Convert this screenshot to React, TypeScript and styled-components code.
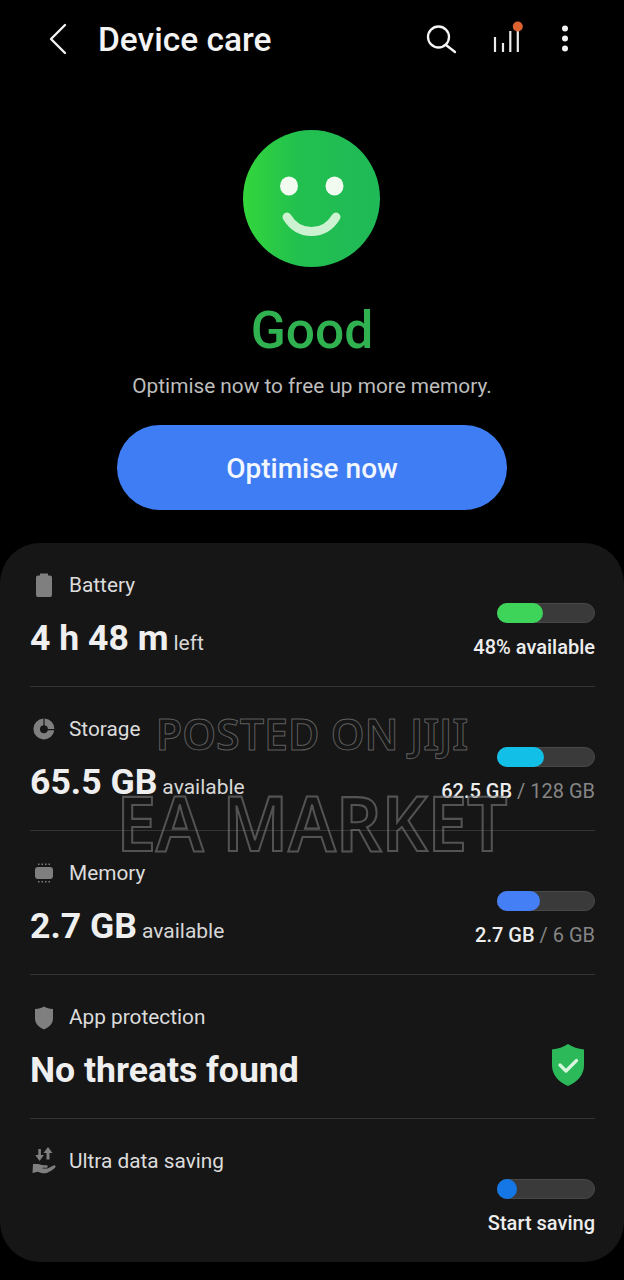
import React from "react";
import styled, { createGlobalStyle } from "styled-components";

const Global = createGlobalStyle`
  html, body { margin: 0; padding: 0; background: #000; }
  body { font-family: Roboto, "Liberation Sans", sans-serif; color: #f2f2f2; }
`;

const Page = styled.div`
  position: relative;
  width: 624px;
  height: 1280px;
  overflow: hidden;
  background: #000;
`;

const Header = styled.header`
  display: flex;
  align-items: center;
  height: 78px;
  padding-left: 48px;
`;

const BackIcon = styled.svg`
  width: 20px;
  height: 32px;
  margin-right: 30px;
`;

const Title = styled.h1`
  flex: 1;
  margin: 0;
  font-size: 33.500px;
  font-weight: 500;
  color: #f4f4f4;
`;

const Actions = styled.svg`
  width: 160px;
  height: 78px;
  margin-right: 40px;
  flex: none;
`;

const Hero = styled.section`
  display: flex;
  flex-direction: column;
  align-items: center;
  padding-top: 52px;
`;

const Face = styled.svg`
  width: 137px;
  height: 137px;
  display: block;
  margin-right: 2px;
`;

const Status = styled.div`
  margin-top: 35px;
  height: 58px;
  line-height: 58px;
  font-size: 51.500px;
  font-weight: 500;
  color: #2fb24f;
`;

const Hint = styled.p`
  margin: 12px 0 0;
  line-height: 28px;
  font-size: 20.800px;
  color: #bdbdbd;
`;

const CTA = styled.button`
  margin-top: 25px;
  width: 390px;
  height: 85px;
  padding: 2px 0 0;
  border: 0;
  border-radius: 43px;
  background: #3f7df4;
  color: #f2f6ff;
  font-family: inherit;
  font-size: 28px;
  font-weight: 500;
`;

const Card = styled.section`
  margin-top: 33px;
  height: 719px;
  padding: 0 29px 0 30px;
  box-sizing: border-box;
  border-radius: 40px;
  background: #161616;
`;

const Row = styled.article`
  display: flex;
  justify-content: space-between;
  height: 144px;
  box-sizing: border-box;
  border-bottom: 1px solid #343434;
  &:last-child { border-bottom: 0; height: 143px; }
`;

const Left = styled.div`
  display: flex;
  flex-direction: column;
  padding-top: 28px;
`;

const Label = styled.div`
  display: flex;
  align-items: center;
  height: 28px;
  font-size: 20.800px;
  color: #dcdcdc;
`;

const LabelIcon = styled.svg`
  width: 28px;
  height: 28px;
  margin-right: 11px;
  flex: none;
  fill: #7f7f7f;
`;

const Value = styled.div`
  margin-top: 17px;
  line-height: 44px;
  font-size: 35.600px;
  font-weight: 700;
  color: #efefef;
`;

const Unit = styled.span`
  margin-left: 5px;
  font-size: 21px;
  font-weight: 400;
  color: #d6d6d6;
`;

const Right = styled.div`
  display: flex;
  flex-direction: column;
  align-items: flex-end;
  padding-top: 60px;
`;

const Track = styled.div`
  width: 98px;
  height: 20px;
  box-sizing: border-box;
  border: 1px solid #484848;
  border-radius: 10px;
  background: #3a3a3a;
  position: relative;
`;

const Fill = styled.div<{ $color: string }>`
  position: absolute;
  left: -1px;
  top: -1px;
  height: 20px;
  border-radius: 10px;
  background: ${(p) => p.$color};
`;

const Reading = styled.div`
  margin-top: 11px;
  line-height: 26px;
  font-size: 20px;
  font-weight: 500;
  color: #ededed;
`;

const Total = styled.span`
  font-weight: 400;
  color: #858585;
`;

const Badge = styled.svg`
  width: 34px;
  height: 42px;
  margin: 69px 10px 0 0;
`;

/* Seller's outlined stamp laid over the card */
const Stamp = styled.div<{ $top: number; $size: number; $stroke: number; $ink: string; $tall: number }>`
  position: absolute;
  left: 0;
  right: 0;
  top: ${(p) => p.$top}px;
  text-align: center;
  font-family: "Noto Sans", "Open Sans", sans-serif;
  font-size: ${(p) => p.$size}px;
  font-weight: 600;
  line-height: 1;
  white-space: nowrap;
  color: transparent;
  -webkit-text-stroke: ${(p) => p.$stroke}px ${(p) => p.$ink};
  transform: scaleY(${(p) => p.$tall});
  transform-origin: 50% 0;
  pointer-events: none;
`;

const Bar = ({ pct, color }: { pct: number; color: string }) => (
  <Track>
    <Fill $color={color} style={{ width: `${pct}%` }} />
  </Track>
);

const BatteryGlyph = () => (
  <LabelIcon viewBox="0 0 28 28">
    <path d="M10 2.500h8v2h2a2 2 0 0 1 2 2v17.500a2 2 0 0 1-2 2h-12a2 2 0 0 1-2-2v-17.500a2 2 0 0 1 2-2h2z" />
  </LabelIcon>
);

const StorageGlyph = () => (
  <LabelIcon viewBox="0 0 28 28">
    <path d="M13.400 3.500a10.500 10.500 0 1 0 10.900 11.800h-6.500a4 4 0 1 1-4.400-5z" />
    <path d="M14.600 3.500a10.500 10.500 0 0 1 9.800 10.600h-6.500a4 4 0 0 0-3.300-3.800z" />
  </LabelIcon>
);

const MemoryGlyph = () => (
  <LabelIcon viewBox="0 0 28 28">
    <rect x="5" y="8" width="18" height="12" rx="3" />
    <path d="M8 4.500h1.500v1.500h-1.500zM11.500 4.500h1.500v1.500h-1.500zM15 4.500h1.500v1.500h-1.500zM18.500 4.500h1.500v1.500h-1.500zM8 22h1.500v1.500h-1.500zM11.500 22h1.500v1.500h-1.500zM15 22h1.500v1.500h-1.500zM18.500 22h1.500v1.500h-1.500z" />
  </LabelIcon>
);

const ShieldGlyph = () => (
  <LabelIcon viewBox="0 0 28 28">
    <path d="M14 3.500c2.500 1.400 5.500 2.200 9 2.500v9.500c0 5-3.600 8.800-9 11-5.400-2.200-9-6-9-11v-9.500c3.500-.3 6.500-1.100 9-2.500z" />
  </LabelIcon>
);

const DataGlyph = () => (
  <LabelIcon viewBox="0 0 28 28">
    <path d="M8.300 2h2.600v6h3l-4.300 6-4.300-6h3zM18 0l4.500 6h-3v6.500h-3V6h-3z" />
    <path d="M3 17h5c2 0 3.500 1.300 5.500 1.300h3c1.700 0 1.700 2.500 0 2.500h-4v.7h5l6-3c1.600-.6 2.800.8 1.700 2-3 2.800-6 4.500-8.500 5.500-2 .6-4 .4-6-.3l-3-1-5.200 1.300z" />
  </LabelIcon>
);

export default function App() {
  return (
    <Page>
      <Global />
      <Header>
        <BackIcon viewBox="0 0 20 32" fill="none" stroke="#f2f2f2" strokeWidth="2.400" strokeLinecap="round" strokeLinejoin="round">
          <path d="M17 2 3 16l14 14" />
        </BackIcon>
        <Title>Device care</Title>
        <Actions viewBox="424 0 160 78">
          <circle cx="438.500" cy="37" r="10.500" fill="none" stroke="#f5f5f5" strokeWidth="2.300" />
          <path d="m446 45 9 7" stroke="#f5f5f5" strokeWidth="2.300" strokeLinecap="round" />
          <g stroke="#ececec" strokeWidth="2.200">
            <path d="M495 37v15M503 43v9M510.300 31v21M517.800 27v25" />
          </g>
          <circle cx="517.800" cy="26.500" r="5" fill="#dc6230" />
          <g fill="#f2f2f2">
            <circle cx="565" cy="28.500" r="3" />
            <circle cx="565" cy="38.500" r="3" />
            <circle cx="565" cy="48.500" r="3" />
          </g>
        </Actions>
      </Header>

      <Hero>
        <Face viewBox="0 0 137 137">
          <defs>
            <linearGradient id="faceShade" x1="0" y1="0" x2="1" y2="0">
              <stop offset="0" stopColor="#33d63b" />
              <stop offset="0.4" stopColor="#22c04f" />
              <stop offset="1" stopColor="#1fb957" />
            </linearGradient>
          </defs>
          <circle cx="68.500" cy="68.500" r="68.500" fill="url(#faceShade)" />
          <ellipse cx="46" cy="56" rx="9" ry="9.500" fill="#f1fbf0" />
          <ellipse cx="91.500" cy="56" rx="9" ry="9.500" fill="#f1fbf0" />
          <path d="M44 87c6 10 14 14.500 24.500 14.500S87 97 93 87" fill="none" stroke="#cdf2d2" strokeWidth="9" strokeLinecap="round" />
        </Face>
        <Status>Good</Status>
        <Hint>Optimise now to free up more memory.</Hint>
        <CTA>Optimise now</CTA>
      </Hero>

      <Card>
        <Row>
          <Left>
            <Label><BatteryGlyph />Battery</Label>
            <Value>4 h 48 m<Unit>left</Unit></Value>
          </Left>
          <Right>
            <Bar pct={48} color="#3ed45a" />
            <Reading>48% available</Reading>
          </Right>
        </Row>
        <Row>
          <Left>
            <Label><StorageGlyph />Storage</Label>
            <Value>65.5 GB<Unit>available</Unit></Value>
          </Left>
          <Right>
            <Bar pct={49} color="#12bfe6" />
            <Reading>62.5 GB <Total>/ 128 GB</Total></Reading>
          </Right>
        </Row>
        <Row>
          <Left>
            <Label><MemoryGlyph />Memory</Label>
            <Value>2.7 GB<Unit>available</Unit></Value>
          </Left>
          <Right>
            <Bar pct={45} color="#447ff5" />
            <Reading>2.7 GB <Total>/ 6 GB</Total></Reading>
          </Right>
        </Row>
        <Row>
          <Left>
            <Label><ShieldGlyph />App protection</Label>
            <Value>No threats found</Value>
          </Left>
          <Badge viewBox="0 0 34 42">
            <path d="M17 0c4.500 3 10 5 16 5.500v16c0 9-6 16-16 20.500C7 37.500 1 30.500 1 21.500v-16C7 5 12.500 3 17 0z" fill="#2bb95a" />
            <path d="m9 21 6 6 10.500-10.500" fill="none" stroke="#d8f6de" strokeWidth="3.200" strokeLinecap="round" strokeLinejoin="round" />
          </Badge>
        </Row>
        <Row>
          <Left>
            <Label><DataGlyph />Ultra data saving</Label>
          </Left>
          <Right>
            <Bar pct={21} color="#1577e6" />
            <Reading>Start saving</Reading>
          </Right>
        </Row>
      </Card>

      <Stamp $top={712} $size={43} $stroke={1} $ink="rgba(135,135,135,0.65)" $tall={1}>POSTED ON JIJI</Stamp>
      <Stamp $top={784} $size={71} $stroke={2} $ink="rgba(125,125,125,0.6)" $tall={1.07}>EA MARKET</Stamp>
    </Page>
  );
}
